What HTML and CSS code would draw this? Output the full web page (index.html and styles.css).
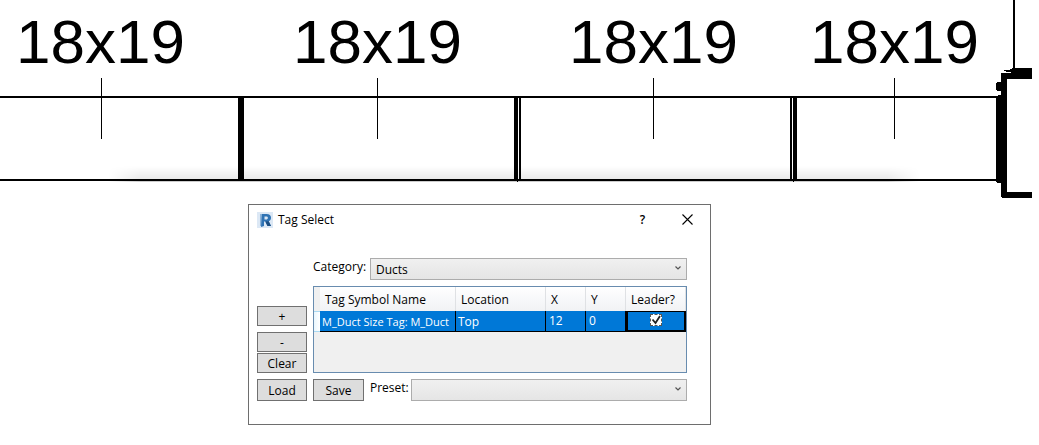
FILE: index.html
```html
<!DOCTYPE html>
<html lang="en">
<head>
<meta charset="utf-8">
<title>Tag Select</title>
<link rel="stylesheet" href="styles.css">
</head>
<body>
<svg class="drawing" viewBox="0 0 1039 204" role="img" aria-label="Duct run with size tags">
  <defs>
    <linearGradient id="shade" x1="0" y1="0" x2="0" y2="1">
      <stop offset="0" stop-color="#000" stop-opacity="0"/>
      <stop offset="1" stop-color="#000" stop-opacity=".09"/>
    </linearGradient>
    <linearGradient id="fade" x1="0" y1="0" x2="1" y2="0">
      <stop offset="0" stop-color="#000"/>
      <stop offset=".04" stop-color="#fff"/>
      <stop offset=".96" stop-color="#fff"/>
      <stop offset="1" stop-color="#000"/>
    </linearGradient>
    <mask id="ends"><rect x="108" y="160" width="812" height="30" fill="url(#fade)"/></mask>
  </defs>
  <g mask="url(#ends)">
    <rect x="108" y="166" width="812" height="14" fill="url(#shade)"/>
    <rect x="108" y="181" width="812" height="1" fill="#ccc"/>
  </g>
  <g class="tags">
    <text x="16" y="63">18x19</text>
    <text x="293" y="63">18x19</text>
    <text x="569" y="63">18x19</text>
    <text x="810" y="63">18x19</text>
  </g>
  <g shape-rendering="crispEdges">
    <path d="M0 96h997v2H0zM0 179h997v2H0z"/>
    <path d="M101 78h1v61h-1zM377 78h1v61h-1zM653 78h1v61h-1zM894 78h1v61h-1z"/>
    <path d="M238 97h6v83h-6zM514 97h4v85h-1v-1h-3zM519 97h2v83h-2zM790 97h2v83h-2zM793 97h4v84h-3v1h-1z"/>
    <path d="M1013 0h2v68h17v11h-25v113h25v6h-30l-1-1v-14h-4l-1-1V97l3-2h2v-4h-4l-1-1v-7l1-1h4v-9h10v-1h-4l-3-1v-1h5l4-2V0z"/>
  </g>
</svg>

<main class="dialog" aria-labelledby="dialog-title">
  <header class="titlebar">
    <svg class="logo" viewBox="0 0 16 16" aria-hidden="true">
      <rect width="16" height="16" fill="#dce8f5"/>
      <path d="M3 2h3v12H3z" fill="#8fb5da"/>
      <path d="M5 2h4.500c3 0 4.500 1.500 4.500 3.800 0 1.800-.9 2.900-2.300 3.400L14 14h-3.500L8.300 9.600H7V14l-3 1z" fill="#2f73b4"/>
      <path d="M7.500 4.500H9c1.200 0 1.900.5 1.900 1.400S10.200 7.400 9 7.400H7.500z" fill="#dce8f5"/>
      <path d="M8.300 9.600l3.400-.4L14 14h-3.500z" fill="#1d4f83"/>
    </svg>
    <h1 class="title" id="dialog-title">Tag Select</h1>
    <button class="caption" type="button" aria-label="Help">?</button>
    <button class="caption" type="button" aria-label="Close">
      <svg class="close" viewBox="0 0 11 11" aria-hidden="true"><path d="M.5.5l10 10M10.500.5l-10 10" fill="none" stroke="#000" stroke-width="1.100"/></svg>
    </button>
  </header>

  <form class="form">
    <div class="field category">
      <label class="label" for="category">Category:</label>
      <span class="combo">
        <select class="select" id="category"><option>Ducts</option></select>
        <svg class="chevron" viewBox="0 0 6 4" aria-hidden="true"><path d="M.5.5L3 3 5.500.5" fill="none" stroke="#555" stroke-width="1.200"/></svg>
      </span>
    </div>

    <div class="side">
      <button class="btn add" type="button">+</button>
      <button class="btn" type="button">-</button>
      <button class="btn" type="button">Clear</button>
    </div>

    <div class="grid">
      <table class="table">
        <colgroup><col class="c-handle"><col><col class="c-location"><col class="c-num"><col class="c-num"><col class="c-leader"></colgroup>
        <thead>
          <tr><td class="corner"></td><th scope="col">Tag Symbol Name</th><th scope="col">Location</th><th scope="col">X</th><th scope="col">Y</th><th scope="col" id="leader">Leader?</th></tr>
        </thead>
        <tbody>
          <tr class="selected"><td class="handle"></td><td class="name">M_Duct Size Tag: M_Duct</td><td>Top</td><td class="num">12</td><td class="num">0</td><td class="focus">
            <span class="tick">
              <input class="check" type="checkbox" checked aria-labelledby="leader">
              <svg class="mark" viewBox="0 0 12 12" aria-hidden="true"><path d="M2.500 5.500l3 3.500 4.500-7" fill="none" stroke="#222" stroke-width="1.800"/></svg>
            </span>
          </td></tr>
        </tbody>
      </table>
    </div>

    <button class="btn tall" type="button">Load</button>
    <div class="field preset">
      <button class="btn tall save" type="button">Save</button>
      <label class="label" for="preset">Preset:</label>
      <span class="combo">
        <select class="select" id="preset"><option></option></select>
        <svg class="chevron" viewBox="0 0 6 4" aria-hidden="true"><path d="M.5.5L3 3 5.500.5" fill="none" stroke="#555" stroke-width="1.200"/></svg>
      </span>
    </div>
  </form>
</main>
</body>
</html>
```
FILE: styles.css
```css
* { box-sizing: border-box; }

body {
  margin: 0;
  background: #fff;
  color: #000;
  font: 12px/16px "Open Sans", "Noto Sans", sans-serif;
}

.drawing { display: block; width: 100%; height: auto; }
.tags { font: 62px "Liberation Sans", Arial, sans-serif; }

.dialog {
  max-width: 463px;
  margin-left: 248px;
  padding: 0 23px 23px 8px;
  border: 1px solid #6e6e6e;
  background: #fff;
}

.titlebar { display: flex; align-items: center; height: 29px; margin-right: -23px; }
.logo { width: 16px; height: 16px; margin-right: 5px; }
.title { flex: 1; margin: 0; font-size: 12px; font-weight: 400; }
.caption {
  width: 45px;
  height: 28px;
  padding: 0;
  border: 0;
  background: none;
  color: #000;
  font: 600 12px/16px "Open Sans", "Noto Sans", sans-serif;
}
.close { display: block; width: 11px; height: 11px; margin: 0 auto; }

.form {
  display: grid;
  grid-template-columns: 50px minmax(0, 1fr);
  gap: 6px;
  padding-top: 24px;
}
.field { display: flex; gap: 6px; }
.category { grid-column: 2; }
.label { padding-top: 1px; white-space: nowrap; }
.category .label { width: 51px; }
.preset .label { width: 35px; }

.combo { position: relative; flex: 1; display: flex; }
.select {
  appearance: none;
  width: 100%;
  height: 22px;
  padding: 2px 5px 0;
  border: 1px solid #acacac;
  border-radius: 0;
  background: linear-gradient(#f0f0f0, #e5e5e5);
  color: #000;
  font: inherit;
}
.chevron { position: absolute; top: 8px; right: 6px; width: 6px; height: 4px; pointer-events: none; }

.btn {
  width: 100%;
  height: 20px;
  padding: 2px 0 0;
  border: 1px solid #707070;
  background: #ddd;
  color: #000;
  font: inherit;
}
.side { display: flex; flex-direction: column; justify-content: flex-end; gap: 1px; }
.add { margin-bottom: 5px; }
.tall { height: 22px; }
.save { flex: none; width: 51px; }

.grid { height: 87px; border: 1px solid #688caf; background: #f0f0f0; }
.table { width: 100%; table-layout: fixed; border-collapse: separate; border-spacing: 0; }
.c-handle { width: 6px; }
.c-location { width: 90px; }
.c-num { width: 40px; }
.c-leader { width: 60px; }
.table td, .table th { padding: 0; text-align: left; font-weight: 400; white-space: nowrap; }
.table th {
  height: 24px;
  padding: 2px 0 0 5px;
  border-right: 1px solid #dfe1e4;
  background: linear-gradient(#fff, #f7f8fa 50%, #f1f2f4);
}
.corner { background: #f0f0f0; }
.table .selected td {
  height: 21px;
  padding: 2px 0 0 2px;
  border-right: 1px solid #000;
  border-bottom: 1px solid #000;
  background: #0078d7;
  color: #fff;
}
.table .selected .handle { padding: 0; border: 1px solid #a9d9f2; border-width: 1px 0; background: linear-gradient(90deg, #e9f6fd, #fff); }
.table .selected .name { overflow: hidden; font-size: 11px; }
.table .selected .num { padding: 0 0 0 3px; }
.table .selected .focus { padding: 0; border: 2px solid #000; border-top-width: 1px; }
.tick { position: relative; display: block; width: 12px; height: 12px; margin: 0 auto 2px; }
.check { appearance: none; display: block; width: 12px; height: 12px; margin: 0; border: 1px dashed #555; background: #fff; }
.mark { position: absolute; inset: 0; pointer-events: none; }
```
